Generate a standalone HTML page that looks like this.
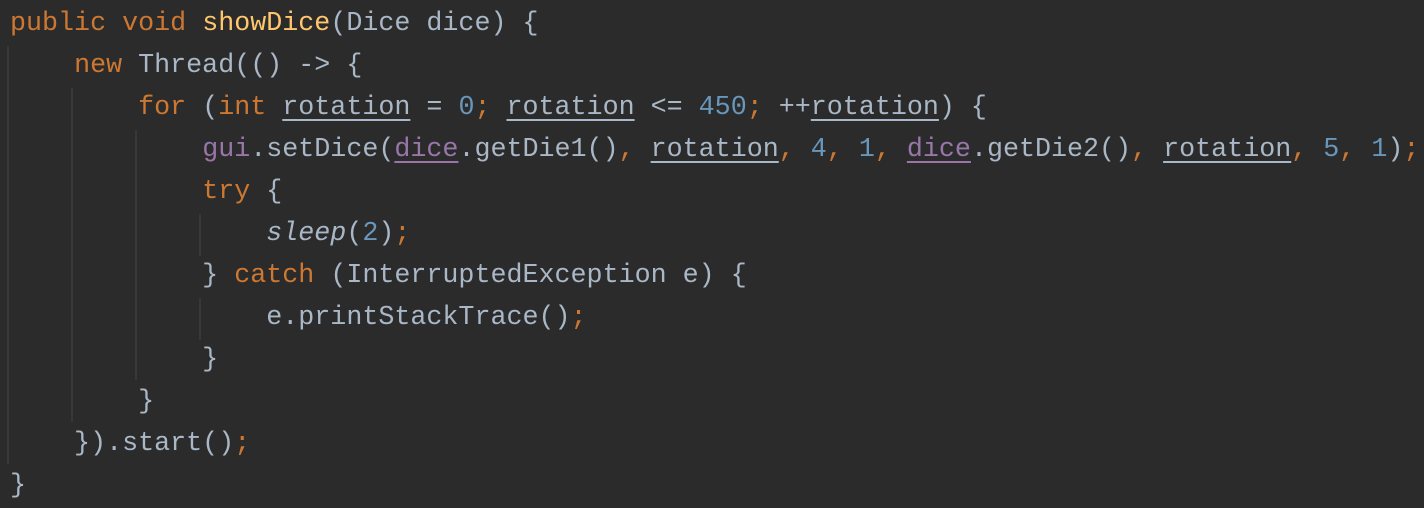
<!DOCTYPE html><html><head><style>
body{margin:0;background:#2b2b2b;width:1424px;height:508px;overflow:hidden;position:relative}
pre{margin:0;position:absolute;left:10px;top:3px;font-family:"Liberation Mono",monospace;font-size:26.7px;line-height:42px;color:#a9b7c6}
.k{color:#cc7832}.m{color:#ffc66d}.n{color:#6897bb}.p{color:#9876aa}.u{text-decoration:underline;text-underline-offset:5px}.i{font-style:italic}
.g{position:absolute;width:2px;background:#383838}
</style></head><body>
<div class="g" style="left:7px;top:46px;height:418px"></div>
<div class="g" style="left:71px;top:88px;height:334px"></div>
<div class="g" style="left:135px;top:130px;height:250px"></div>
<div class="g" style="left:199px;top:214px;height:42px"></div>
<div class="g" style="left:199px;top:298px;height:42px"></div>
<pre><span class="k">public void </span><span class="m">showDice</span>(Dice dice) {
    <span class="k">new </span>Thread(() -&gt; {
        <span class="k">for </span>(<span class="k">int </span><span class="u">rotation</span> = <span class="n">0</span><span class="k">; </span><span class="u">rotation</span> &lt;= <span class="n">450</span><span class="k">; </span>++<span class="u">rotation</span>) {
            <span class="p">gui</span>.setDice(<span class="p u">dice</span>.getDie1()<span class="k">, </span><span class="u">rotation</span><span class="k">, </span><span class="n">4</span><span class="k">, </span><span class="n">1</span><span class="k">, </span><span class="p u">dice</span>.getDie2()<span class="k">, </span><span class="u">rotation</span><span class="k">, </span><span class="n">5</span><span class="k">, </span><span class="n">1</span>)<span class="k">;</span>
            <span class="k">try </span>{
                <span class="i">sleep</span>(<span class="n">2</span>)<span class="k">;</span>
            } <span class="k">catch </span>(InterruptedException e) {
                e.printStackTrace()<span class="k">;</span>
            }
        }
    }).start()<span class="k">;</span>
}</pre>
</body></html>
